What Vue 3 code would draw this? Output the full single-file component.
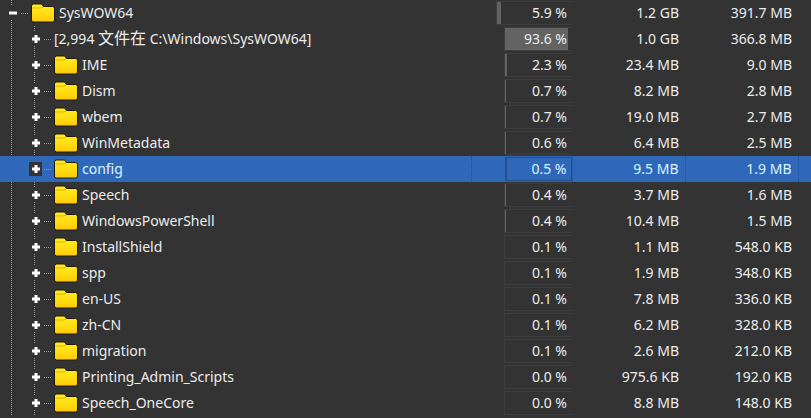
<template>
  <table class="tree">
    <colgroup>
      <col />
      <col class="col-percent" />
      <col class="col-size" />
      <col class="col-size" />
      <col class="col-tail" />
    </colgroup>
    <tbody>
      <tr v-for="row in rows" :key="row.name" :class="{ selected: row.name === selected }" @click="selected = row.name">
        <td>
          <div class="name-cell">
            <span v-if="row.depth > 0" class="guide"></span>
            <span class="node">
              <button class="toggle" type="button" :aria-label="row.name">
                <svg width="8" height="8" viewBox="0 0 8 8">
                  <path d="M0 2.5h8v3H0z" fill="#fff" />
                  <path v-if="row.depth > 0" d="M2.5 0h3v8h-3z" fill="#fff" />
                </svg>
              </button>
            </span>
            <span class="stub"></span>
            <svg v-if="!row.files" class="folder" width="24" height="20" viewBox="0 0 24 20">
              <defs>
                <linearGradient id="folderFill" x1="0" y1="0" x2="0" y2="1">
                  <stop offset="0" stop-color="#ffea28" />
                  <stop offset="0.5" stop-color="#ffdf12" />
                  <stop offset="1" stop-color="#ffc90a" />
                </linearGradient>
              </defs>
              <path d="M.5 3Q.5 1 2.5 1H10Q11 1 11.5 2L12.2 3.5H21.5Q23.5 3.5 23.5 5.5V17Q23.5 19 21.5 19H2.5Q.5 19 .5 17z" fill="url(#folderFill)" stroke="#1d1a10" />
              <path d="M1.5 5H10L12.2 4" fill="none" stroke="#e0b800" />
            </svg>
            <span v-if="row.files" class="label">[{{ row.files }} <span class="cjk">文件在</span> {{ row.name }}]</span>
            <span v-else class="label">{{ row.name }}</span>
          </div>
        </td>
        <td>
          <div class="percent" :class="{ root: row.depth === 0 }">
            <div class="bar" :style="{ width: row.percent + '%' }"></div>
            <span class="value">{{ row.percent.toFixed(1) }} %</span>
          </div>
        </td>
        <td class="size">{{ row.size }}</td>
        <td class="size">{{ row.allocated }}</td>
        <td></td>
      </tr>
    </tbody>
  </table>
</template>

<script setup>
import { ref } from "vue";

const selected = ref("config");

const rows = [
  { name: "SysWOW64", depth: 0, percent: 5.9, size: "1.2 GB", allocated: "391.7 MB" },
  { name: "C:\\Windows\\SysWOW64", depth: 1, files: "2,994", percent: 93.6, size: "1.0 GB", allocated: "366.8 MB" },
  { name: "IME", depth: 1, percent: 2.3, size: "23.4 MB", allocated: "9.0 MB" },
  { name: "Dism", depth: 1, percent: 0.7, size: "8.2 MB", allocated: "2.8 MB" },
  { name: "wbem", depth: 1, percent: 0.7, size: "19.0 MB", allocated: "2.7 MB" },
  { name: "WinMetadata", depth: 1, percent: 0.6, size: "6.4 MB", allocated: "2.5 MB" },
  { name: "config", depth: 1, percent: 0.5, size: "9.5 MB", allocated: "1.9 MB" },
  { name: "Speech", depth: 1, percent: 0.4, size: "3.7 MB", allocated: "1.6 MB" },
  { name: "WindowsPowerShell", depth: 1, percent: 0.4, size: "10.4 MB", allocated: "1.5 MB" },
  { name: "InstallShield", depth: 1, percent: 0.1, size: "1.1 MB", allocated: "548.0 KB" },
  { name: "spp", depth: 1, percent: 0.1, size: "1.9 MB", allocated: "348.0 KB" },
  { name: "en-US", depth: 1, percent: 0.1, size: "7.8 MB", allocated: "336.0 KB" },
  { name: "zh-CN", depth: 1, percent: 0.1, size: "6.2 MB", allocated: "328.0 KB" },
  { name: "migration", depth: 1, percent: 0.1, size: "2.6 MB", allocated: "212.0 KB" },
  { name: "Printing_Admin_Scripts", depth: 1, percent: 0.0, size: "975.6 KB", allocated: "192.0 KB" },
  { name: "Speech_OneCore", depth: 1, percent: 0.0, size: "8.8 MB", allocated: "148.0 KB" },
];
</script>

<style>
body {
  background: #333;
}
</style>

<style scoped>
.tree {
  width: 100%;
  table-layout: fixed;
  border-collapse: collapse;
  color: #ececec;
  font-family: "Noto Sans", "Noto Sans CJK SC", sans-serif;
  font-size: 14px;
  line-height: 26px;
  cursor: default;
}

.col-percent {
  width: 101px;
}

.col-size {
  width: 113px;
}

.col-tail {
  width: 13px;
}

td {
  height: 26px;
  padding: 0;
  white-space: nowrap;
}

.name-cell {
  display: flex;
  align-items: center;
  height: 26px;
  overflow: hidden;
}

.cjk {
  font-size: 16px;
  line-height: 1;
}

/* 树形虚线 */
.guide,
.node {
  flex: none;
  height: 26px;
  background: repeating-linear-gradient(#999 0 1px, transparent 1px 2px) 11px 0 / 1px 100% no-repeat;
}

.guide {
  width: 23px;
}

.node {
  display: flex;
  align-items: center;
  box-sizing: border-box;
  width: 20px;
  padding-left: 6px;
}

.toggle {
  display: flex;
  align-items: center;
  justify-content: center;
  width: 13px;
  height: 14px;
  padding: 0;
  border: 0;
  background: #333;
}

.stub {
  flex: none;
  width: 7px;
  height: 1px;
  margin: 0 3px 0 1px;
  background: repeating-linear-gradient(90deg, #999 0 1px, transparent 1px 2px);
}

.folder {
  flex: none;
  margin-right: 4px;
}

/* 占比条 */
.percent {
  position: relative;
  box-sizing: border-box;
  height: 24px;
  margin-left: 33px;
  border: 1px solid #3d3d3d;
  border-right: 0;
  line-height: 22px;
}

.percent.root {
  margin-left: 25px;
}

.bar {
  height: 22px;
  background: #636363;
}

.value {
  position: absolute;
  top: 0;
  right: 5px;
}

.size {
  padding-right: 6px;
  text-align: right;
}

.selected {
  background: #2f68b8;
  color: #dcf4ff;
}

.selected td {
  border-right: 1px dotted #234f8f;
}

.selected td:last-child {
  border-right: 0;
}

.selected .guide,
.selected .node {
  background: none;
}

.selected .percent {
  border: 1px solid #234f8f;
}

.selected .bar {
  background: #234f8f;
}

.selected .value {
  right: 4px;
}
</style>
